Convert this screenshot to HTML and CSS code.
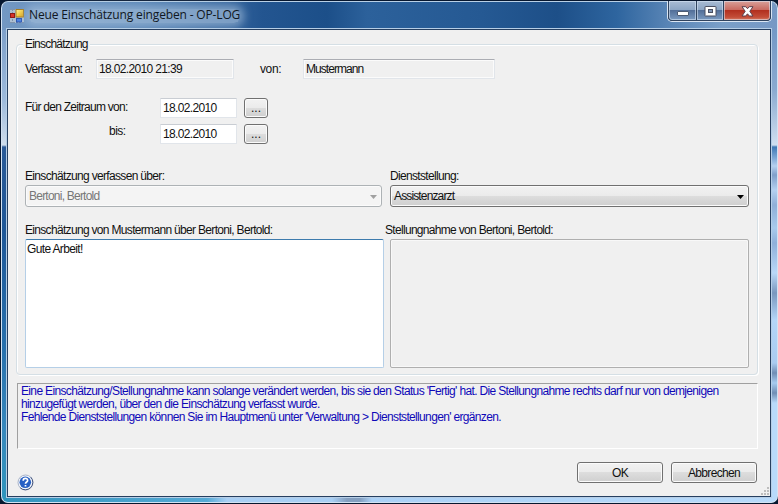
FILE: index.html
```html
<!DOCTYPE html>
<html lang="de">
<head>
<meta charset="utf-8">
<title>Neue Einschätzung eingeben - OP-LOG</title>
<link rel="stylesheet" href="styles.css">
</head>
<body>
<div class="window">
  <header class="titlebar">
    <svg class="app-icon" width="14" height="14" viewBox="0 0 14 14">
      <defs>
        <linearGradient id="gold" x2="1" y2="1"><stop stop-color="#fff3a8"/><stop offset=".5" stop-color="#f6cf45"/><stop offset="1" stop-color="#d99a10"/></linearGradient>
      </defs>
      <rect width="14" height="14" fill="#aebfd2" stroke="none"/>
      <path d="M0 .5H5M0 13.500H14M2.500 0V4M2.500 10V14" stroke="#7f93ac" stroke-dasharray="2 1" fill="none"/>
      <rect x="6" y=".5" width="7.500" height="7.500" fill="url(#gold)" stroke="#a87c1c"/>
      <rect x=".5" y="4.500" width="4" height="4" fill="#d8332a" stroke="#8e1a18"/>
      <rect x="6.500" y="9.500" width="5" height="3.500" fill="#4a80e0" stroke="#2c55b0"/>
    </svg>
    <h1 class="title">Neue Einschätzung eingeben - OP-LOG</h1>
    <div class="controls">
      <span class="control minimize"><svg width="14" height="10"><rect x="1.500" y="4.500" width="11" height="4" rx=".5" fill="#fff" stroke="#4d5c74"/></svg></span>
      <span class="control maximize"><svg width="13" height="11"><rect x="1" y=".5" width="11" height="9.500" rx=".5" fill="#fff" stroke="#4b4f60"/><rect x="4.500" y="3.500" width="4" height="3" fill="#7e94b5" stroke="#4b4f60"/></svg></span>
      <span class="control close"><svg width="13" height="11" viewBox="0 0 13 11"><path d="M1 .7h3.700l1.800 2 1.800-2H12L8.800 5.300 12 10H8.300L6.500 7.800 4.700 10H1l3.200-4.700z" fill="#fff" stroke="#5c3f4b"/></svg></span>
    </div>
  </header>

  <main class="client">
    <section class="group">
      <h2 class="legend">Einschätzung</h2>

      <div class="row row-author">
        <span class="label t-written">Verfasst am:</span>
        <div class="field readonly date-time">18.02.2010 21:39</div>
        <span class="label by">von:</span>
        <div class="field readonly author">Mustermann</div>
      </div>

      <div class="period">
        <span class="label t-from">Für den Zeitraum von:</span>
        <div class="field date">18.02.2010</div>
        <div class="button pick">...</div>
        <span class="label until">bis:</span>
        <div class="field date">18.02.2010</div>
        <div class="button pick">...</div>
      </div>

      <div class="columns">
        <div class="column">
          <span class="label t-about">Einschätzung verfassen über:</span>
          <div class="combo disabled"><span>Bertoni, Bertold</span><i class="arrow"></i></div>
          <span class="label note-label">Einschätzung von Mustermann über Bertoni, Bertold:</span>
          <div class="area focused">Gute Arbeit!</div>
        </div>
        <div class="column">
          <span class="label t-office">Dienststellung:</span>
          <div class="combo role"><span>Assistenzarzt</span><i class="arrow"></i></div>
          <span class="label note-label reply">Stellungnahme von Bertoni, Bertold:</span>
          <div class="area locked"></div>
        </div>
      </div>
    </section>

    <div class="info">
      <p>Eine Einschätzung/Stellungnahme kann solange verändert werden, bis sie den Status 'Fertig' hat. Die Stellungnahme rechts darf nur von demjenigen</p>
      <p>hinzugefügt werden, über den die Einschätzung verfasst wurde.</p>
      <p class="t-menu">Fehlende Dienststellungen können Sie im Hauptmenü unter 'Verwaltung &gt; Dienststellungen' ergänzen.</p>
    </div>

    <footer class="footer">
      <svg class="help" width="17" height="17" viewBox="0 0 17 17">
        <circle cx="8.500" cy="8.500" r="7.500" fill="#f4f7fc" stroke="#a8b3c8"/>
        <path d="M13.800 3.200A7.500 7.500 0 0 1 3.200 13.800" fill="none" stroke="#45567e"/>
        <circle cx="8.300" cy="8.300" r="5.800" fill="#2860c4"/>
        <path d="M6.200 6.700c0-3 4.500-2.900 4.400-.3 0 1.600-2.100 1.600-2.100 3.300M8.500 11v1.600" fill="none" stroke="#fff" stroke-width="1.700"/>
      </svg>
      <div class="button ok">OK</div>
      <div class="button cancel">Abbrechen</div>
      <svg class="grip" width="8" height="8" viewBox="0 0 8 8"><path d="M6 0h2v2H6zM3 3h2v2H3zM6 3h2v2H6zM0 6h2v2H0zM3 6h2v2H3zM6 6h2v2H6z" fill="#bdbdbd"/></svg>
    </footer>
  </main>
</div>
</body>
</html>
```
FILE: styles.css
```css
* { box-sizing: border-box; }

body {
  margin: 0;
  height: 504px;
  overflow: hidden;
  background: #07172f;
  color: #111;
  font: 12px/14px "Liberation Sans", Arial, sans-serif;
  letter-spacing: -.65px;
}

h1, h2, p { margin: 0; font-size: inherit; font-weight: normal; }
svg { display: block; }

.window {
  width: 777px;
  height: 502px;
  margin-left: 1px;
  padding: 0 6px 5px 5px;
  border: 1px solid #d3e2f2;
  border-top-color: #b9d0e6;
  border-radius: 7px;
  position: relative;
  top: 1px;
  background:
    linear-gradient(#7398c6 0, #8aaad0 60px, #cfdff0 115px, #3e78b5 117px, #7ea8d6 128px, #b5d0f0 136px, #7f9fca 145px, #b5d0f0 160px, #8fafd8 175px, #a9caec 198px, #8fb0da 213px, #b9d8f8 243px, #7997be 263px, #b4d6f8 290px, #a9cbf0 333px, #6f8db4 343px, #a6cbf0 353px, #6f8db4 363px, #b8dafa 373px) right 0 top 28px / 6px 100% no-repeat,
    linear-gradient(#7ea0ca 0, #9dbadb 70px, #cfddec 115px, #2a5a97 117px, #1e5798 200px, #2871ad 320px, #3788bd 400px, #2f95bd 468px) left 0 top 28px / 6px 100% no-repeat,
    linear-gradient(90deg, #3394bd, #55aad5 205px, #a9cff4 225px, #a9cff4 330px, #849fc0 345px, #849fc0 358px, #abd1f6 370px, #b8dafa) left bottom / 100% 8px no-repeat,
    linear-gradient(90deg, #7398c3 0, #5583b5 140px, #2f6099 235px, #235590 260px, #1c4f89 325px, #2c619b 365px, #255993 480px, #1d4f88 555px, #2e659f 615px, #5884b5 665px, #7a9fc8 720px, #7698c4 777px);
}

.titlebar { display: flex; height: 27px; padding: 7px 0 0 3px; }
.app-icon { margin: 0 5px 0 0; }
.title {
  height: 14px;
  color: #101722;
  background: rgba(165, 190, 218, .65);
  border-radius: 6px;
  box-shadow: 0 0 8px 4px rgba(165, 190, 218, .65);
  font: 12px/12px "Open Sans", "Noto Sans", sans-serif;
  letter-spacing: -.15px;
  white-space: nowrap;
}
.controls {
  display: flex;
  width: 105px;
  height: 21px;
  margin: -8px -1px 0 auto;
  border: 1px solid #dbe6f3;
  border-top: 0;
  border-radius: 0 0 5px 5px;
  box-shadow: inset 0 0 0 1px #30435e;
  overflow: hidden;
}
.control {
  display: grid;
  place-items: center;
  width: 29px;
  padding-top: 2px;
  background: linear-gradient(#a9bcd4 0, #8ba4c3 48%, #536f99 50%, #7b9ac0 100%);
  border: 1px solid #30435e;
  border-top: 0;
  border-left: 0;
  box-shadow: inset 0 0 0 1px rgba(220, 233, 248, .55);
}
.minimize { border-left: 1px solid #30435e; border-radius: 0 0 0 4px; }
.maximize { width: 27px; }
.close {
  flex: 1;
  background: linear-gradient(#d9a19a 0, #c9695f 47%, #b2301f 50%, #c34d38 85%, #d77c65);
  border-radius: 0 0 4px 0;
}

.client {
  width: 764px;
  height: 468px;
  padding: 14px 12px 0 8px;
  border: 1px solid #263f60;
  box-shadow: 0 0 0 1px #b6cee6;
  background: #f0f0f0;
  position: relative;
}

.group {
  width: 742px;
  height: 331px;
  padding-left: 8px;
  border: 1px solid #d5dfe5;
  border-radius: 4px;
  box-shadow: inset 1px 1px #fff, 1px 1px #fff;
}
.legend {
  width: max-content;
  height: 14px;
  margin: -8px 0 0 -2px;
  padding: 0 2px;
  background: #f0f0f0;
  letter-spacing: -.78px;
  white-space: nowrap;
}
.label { white-space: nowrap; }
.row { display: flex; }
.row-author { margin-top: 8px; }
.row-author .label { width: 71px; padding-top: 3px; }
.row-author .by { width: 43px; margin-left: 26px; letter-spacing: -.38px; }
.row-author .t-written { letter-spacing: -.8px; }

.field {
  height: 20px;
  padding: 3px 3px 0 4px;
  background: #fff;
  border: 1px solid #e1e5ea;
  border-top-color: #abadb3;
  border-radius: 1px;
  white-space: nowrap;
}
.readonly { padding: 2px 2px 0; background: #f0f0f0; box-shadow: inset 0 0 0 1px #fbfbfb; }
.date-time { width: 138px; }
.author { width: 192px; letter-spacing: -.95px; }
.date { padding: 2px 0 0 2px; border-top-color: #c9cdd3; }

.period {
  display: grid;
  grid-template-columns: 135px 77px 24px;
  grid-auto-rows: 20px;
  row-gap: 6px;
  margin-top: 19px;
}
.period .label { padding-top: 2px; }
.period .until { padding: 0 0 0 84px; letter-spacing: -.5px; }
.t-from { letter-spacing: -.74px; }
.pick { margin-left: 7px; width: 24px; height: 20px; letter-spacing: 0; }

.button {
  display: grid;
  place-items: center;
  border: 1px solid #707070;
  border-radius: 3px;
  background: linear-gradient(#f2f2f2 0, #ebebeb 49%, #dddddd 50%, #cfcfcf 100%);
  box-shadow: inset 0 0 0 1px #fbfbfb;
}

.columns { display: grid; grid-template-columns: 359px 359px; column-gap: 6px; margin-top: 25px; }
.column { display: flex; flex-direction: column; }
.column > .label { height: 16px; }
.t-about { letter-spacing: -.67px; }
.t-office { letter-spacing: -.67px; }
.combo {
  display: flex;
  justify-content: space-between;
  height: 22px;
  padding: 3px 4px 0 3px;
  border: 1px solid #707070;
  border-radius: 3px;
  background: linear-gradient(#f2f2f2 0, #ebebeb 49%, #dddddd 50%, #cfcfcf 100%);
  box-shadow: inset 0 0 0 1px #fbfbfb;
  white-space: nowrap;
}
.combo.disabled { width: 357px; color: #777; background: #f4f4f4; border-color: #adb2b5; letter-spacing: -.77px; }
.role { letter-spacing: -.86px; }
.arrow { width: 7px; height: 4px; margin-top: 6px; background: #000; clip-path: polygon(0 0, 100% 0, 50% 100%); }
.disabled .arrow { background: #a0a0a0; }
.column > .note-label { height: 16px; margin-top: 16px; letter-spacing: -.68px; }
.column > .reply { margin-left: -5px; letter-spacing: -.69px; }
.area { height: 129px; padding: 2px 1px; border: 1px solid #b5cfe7; border-top-color: #3d7bad; border-radius: 2px; background: #fff; }
.area.locked { background: #f0f0f0; border-color: #afafaf; box-shadow: inset 0 0 0 1px #f8f8f8; }

.info {
  width: 741px;
  height: 66px;
  margin: 8px 0 0 1px;
  padding: 1px 3px;
  border: 1px solid;
  border-color: #a0a0a0 #fff #fff #a0a0a0;
  color: #0f08b8;
  line-height: 13px;
  white-space: nowrap;
}
.t-menu { letter-spacing: -.66px; }

.footer { display: flex; margin-top: 13px; }
.help { margin: 12px auto 0 1px; }
.ok, .cancel { width: 86px; height: 21px; }
.ok { margin-right: 8px; }
.grip { flex: none; margin: 25px -11px 0 4px; }
```
